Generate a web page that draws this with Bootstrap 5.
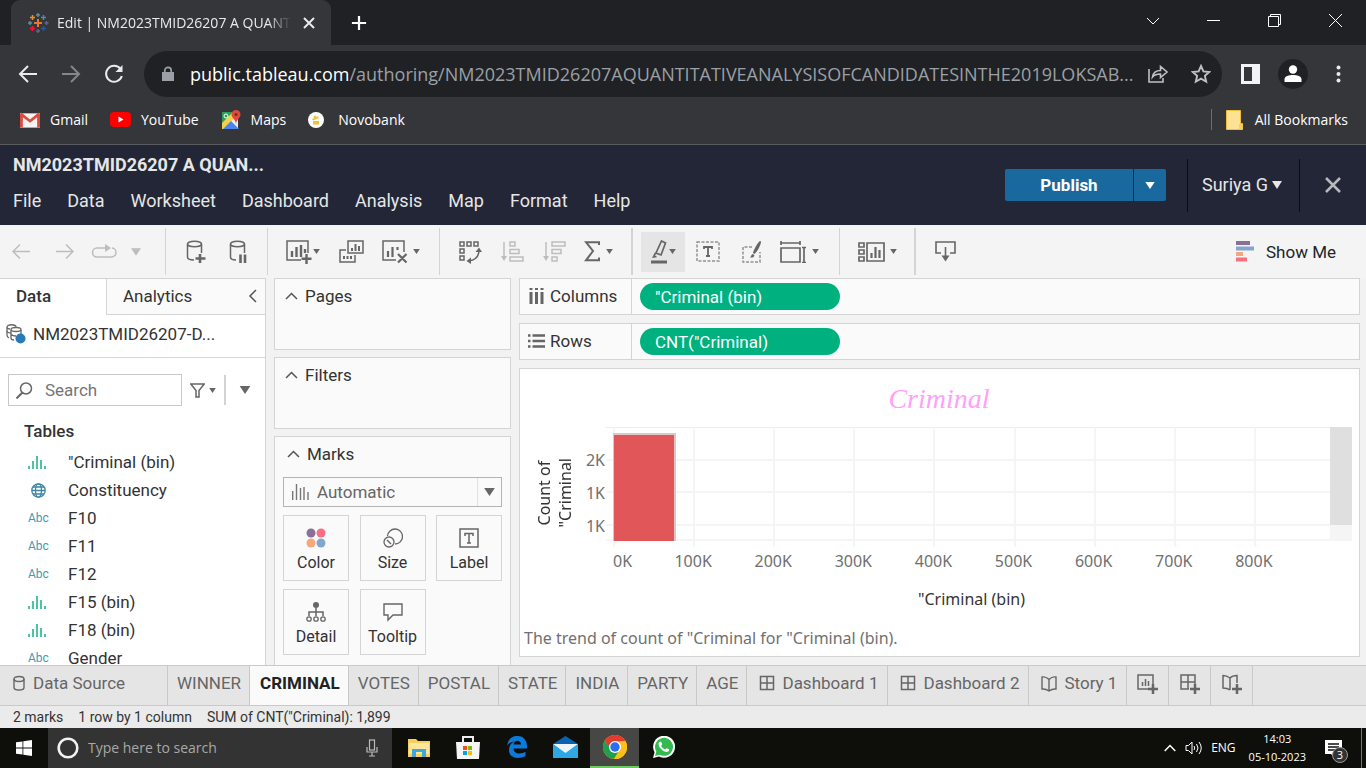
<!DOCTYPE html>
<html lang="en">
<head>
<meta charset="utf-8">
<meta name="viewport" content="width=device-width, initial-scale=1">
<title>Edit | NM2023TMID26207 A QUANTITATIVE ANALYSIS</title>
<link href="https://cdn.jsdelivr.net/npm/bootstrap@5.3.0/dist/css/bootstrap.min.css" rel="stylesheet">
<style>
  :root {
    --sys: "Open Sans", "Noto Sans", sans-serif;
    --app: Roboto, "Liberation Sans", sans-serif;
    --chart: "Noto Sans", "Open Sans", sans-serif;
    --line: #d4d4d4;
    --icon: #666;
  }
  body { height: 100vh; font-family: var(--app); font-size: 17px; line-height: 24px; color: #333; background: #f2f2f2; overflow: hidden; }
  svg { display: block; flex: none; }
  button { background: none; border: 0; padding: 0; color: inherit; font: inherit; }
  a { color: inherit; text-decoration: none; }
  h2, h3 { font: inherit; margin: 0; }
  .ln { fill: none; stroke: currentColor; stroke-width: 2; }
  .mid { fill: none; stroke: currentColor; stroke-width: 1.5; }
  .thin { fill: none; stroke: currentColor; stroke-width: 1; }

  /* browser frame */
  .tabstrip { height: 45px; background: #202124; color: #fff; font-family: var(--sys); }
  .btab { width: 320px; margin-left: 11px; padding: 0 16px; background: #35363a; border-radius: 9px 9px 0 0; font-size: 14px; color: #e8eaed; }
  .btab-title { -webkit-mask-image: linear-gradient(90deg, #000 90%, transparent); mask-image: linear-gradient(90deg, #000 90%, transparent); }
  .winbtn { width: 61px; }
  .navrow { height: 58px; padding: 0 25px 0 14px; background: #35363a; color: #e8eaed; }
  .navrow .navbtn { width: 43px; flex: none; }
  .omni { height: 46px; border-radius: 23px; background: #202124; color: #9aa0a6; font-family: var(--sys); font-size: 18px; padding: 0 14px 0 16px; gap: 14px; min-width: 0; margin-left: 1px; margin-right: 16px; }
  .omni .host { color: #fff; }
  .omni-ic { color: #bdc1c6; gap: 22px; }
  .dimnav { color: #85868a; }
  .avatar { width: 30px; height: 30px; border-radius: 50%; background: #202124; }
  .bmarks { height: 42px; padding: 0 18px 8px 20px; background: #35363a; border-bottom: 1px solid #5b5c60; color: #fff; font-family: var(--sys); font-size: 14px; gap: 22px; }
  .bmarks a { gap: 10px; }
  .bmarks .allb { border-left: 1px solid #6b6c70; height: 21px; padding-left: 14px; gap: 12px; }

  /* workbook header */
  .wbhead { height: 80px; background: #232637; color: #e6e6e6; padding-left: 13px; font-size: 18px; }
  .wbname { font-weight: 700; }
  .wbmenu { gap: 26px; }
  .pub { width: 128px; height: 32px; background: #19699f; color: #fff; font-size: 17px; font-weight: 700; border-radius: 2px 0 0 2px; }
  .pubmore { width: 33px; height: 32px; background: #19699f; color: #fff; border-radius: 0 2px 2px 0; }
  .userbox { height: 53px; border: solid #0b0c12; border-width: 0 1px; padding: 0 17px 0 14px; margin-left: 21px; }
  .wbclose { width: 66px; }

  /* toolbar */
  .tools { height: 53px; padding: 3px 0; background: #f4f4f4; color: var(--icon); }
  .grp { border-right: 1px solid #d4d4d4; }
  .grp.wide-sep { border-right-width: 2px; }
  .grp.last-grp { border: 0; }
  .grp button { height: 40px; width: 42px; display: flex; align-items: center; justify-content: center; gap: 1px; }
  .grp button.w24 { width: 24px; } .grp button.w46 { width: 46px; } .grp button.w52 { width: 52px; }
  .grp button.dim { color: #bdbdbd; }
  .grp button.on { background: #e5e5e5; width: 44px; }
  .showme { padding-right: 30px; gap: 12px; }

  /* panes */
  .work { min-height: 0; }
  .datapane { width: 266px; background: #fff; border-top: 1px solid var(--line); border-right: 1px solid var(--line); overflow: hidden; }
  .panetabs { height: 36px; }
  .panetabs .t1 { width: 106px; padding: 0 0 2px 16px; font-weight: 500; text-align: left; }
  .panetabs .t2 { background: #fafafa; border: solid var(--line); border-width: 0 0 1px 1px; padding: 0 8px 2px 16px; }
  .dsrow { height: 43px; border-bottom: 1px solid var(--line); padding: 0 6px 4px; gap: 7px; }
  .searchrow { padding: 16px 14px 0 8px; color: #666; }
  .sbox { width: 174px; height: 32px; border: 1px solid #c8c8c8; padding-left: 7px; gap: 12px; }
  .sbox input { border: 0; outline: 0; padding: 0; min-width: 0; width: 100%; font: inherit; color: #333; background: none; }
  .sbox input::placeholder { color: #757575; opacity: 1; }
  .vbar { width: 2px; height: 30px; background: #d4d4d4; }
  .tblname { padding: 13px 0 5px 24px; font-weight: 500; }
  .fields { margin: 0; padding: 0; list-style: none; }
  .fields li { height: 28px; padding-left: 28px; }
  .fields .ft { width: 40px; color: #4996b2; font-size: 12px; }
  .fields .gr { color: #4cc3a2; }

  .shelves { width: 237px; margin-left: 8px; gap: 7px; }
  .box { background: #fafafa; border: 1px solid var(--line); }
  .shelf { height: 72px; padding: 5px 10px; }
  .shelf-h { gap: 7px; }
  .marks { padding: 5px 8px 0; border-bottom: 0; }
  .marktype { height: 30px; border: 1px solid #b4b4b4; margin: 11px 0 8px; color: #666; }
  .marktype select { appearance: none; border: 0; background: none; color: inherit; font: inherit; padding: 0; outline: 0; }
  .marktype .dd { width: 24px; border-left: 1px solid #e2e2e2; height: 100%; }
  .markgrid { display: grid; grid-template-columns: repeat(3, 66px); justify-content: space-between; row-gap: 8px; }
  .markgrid button { height: 66px; border: 1px solid var(--line); padding-top: 5px; display: flex; flex-direction: column; align-items: center; justify-content: center; gap: 5px; font-size: 16px; line-height: 20px; }
  .markgrid svg { color: var(--icon); }

  .canvas { margin: 0 6px 8px 8px; min-width: 0; }
  .rc { height: 37px; margin-bottom: 8px; }
  .rc-l { width: 112px; height: 100%; border-right: 1px solid var(--line); padding: 0 0 2px 8px; gap: 5px; }
  .pill { width: 200px; height: 27px; border-radius: 14px; background: #00b180; color: #fff; padding: 0 15px; margin-left: 8px; text-align: left; }
  .view { background: #fff; border: 1px solid var(--line); padding: 12px 7px 5px 6px; min-height: 0; font-family: var(--chart); font-size: 16px; line-height: 20px; color: #707070; }
  .view h2 { font: italic 28px/36px "Liberation Serif", serif; color: #ffa0fa; text-align: center; }
  .chart { margin-top: 10px; display: grid; grid-template-columns: 58px 22px 7px minmax(0, 1fr) 22px; grid-template-rows: minmax(0, 1fr) 6px; min-height: 0; }
  .yname { grid-area: 1 / 1 / 3 / 2; writing-mode: vertical-rl; transform: rotate(180deg); text-align: center; color: #333; line-height: 21px; margin-top: 12px; padding-left: 8px; white-space: nowrap; align-self: center; justify-self: end; }
  .glrows { display: grid; grid-template-rows: 33fr 33fr 33fr 15fr; }
  .lines { grid-area: 1 / 3 / 2 / 5; border-top: 1px solid #ededed; }
  .lines div { border-bottom: 2px solid #f5f5f5; }
  .ylab { grid-area: 1 / 1 / 2 / 3; text-align: right; padding-right: 1px; }
  .ylab span { align-self: end; transform: translateY(50%); }
  .cols9 { display: grid; grid-template-columns: repeat(8, minmax(0, 80fr)) minmax(0, 76fr); }
  .vlines { grid-area: 1 / 4 / 3 / 5; }
  .vlines div { border-left: 2px solid #f5f5f5; }
  .bars { grid-area: 1 / 4 / 2 / 5; padding: 6px 0 0; z-index: 1; }
  .bars div { height: 100%; background: #e15759; border: solid #dcc6c6; border-width: 2px 2px 0 1px; }
  .vscroll { grid-area: 1 / 5 / 2 / 6; background: #f5f5f5; }
  .vscroll div { height: 86%; background: #dfdfdf; }
  .xlab { margin: 4px 22px 0 87px; }
  .xlab span { width: 0; display: flex; justify-content: center; white-space: nowrap; }
  .xlab span:first-child { justify-content: flex-start; }
  .xname { margin: 18px 22px 0 87px; text-align: center; color: #333; }
  .capt { margin: 19px 0 3px -2px; }

  /* sheet tabs and status */
  .sheets { height: 41px; background: #e5e5e5; border: solid #c9c9c9; border-width: 1px 0; color: #666; }
  .sheets button { border-right: 1px solid #c9c9c9; padding: 0 8px 5px 9px; display: flex; align-items: center; justify-content: center; gap: 7px; white-space: nowrap; }
  .sheets .src { width: 168px; justify-content: flex-start; padding-left: 12px; }
  .sheets .cur { background: #fafafa; color: #222; font-weight: 700; padding-left: 10px; }
  .sheets .ic { padding-left: 12px; padding-right: 9px; }
  .sheets .add { width: 42px; padding: 0 0 3px; }
  .stat { height: 22px; background: #ebebeb; padding-left: 13px; gap: 15px; font-size: 14px; line-height: 22px; }

  /* taskbar */
  .task { height: 40px; background: #0e0e0b; color: #fff; font-family: var(--sys); }
  .task .st { width: 48px; }
  .tsearch { width: 344px; background: #333; padding: 0 13px 0 9px; gap: 9px; }
  .tsearch input { border: 0; background: none; outline: 0; color: #fff; font: inherit; font-size: 14px; padding: 0; min-width: 0; }
  .tsearch input::placeholder { color: #a8a8a8; opacity: 1; }
  .apps { padding-left: 2px; }
  .task .app { width: 49px; display: flex; align-items: center; justify-content: center; border-bottom: 2px solid transparent; }
  .task .app.run { background: #474846; border-color: #6ccb5f; }
  .tray { font-size: 12px; line-height: 18px; gap: 9px; padding-right: 4px; white-space: nowrap; }
  .clock { font-size: 11px; }
  .notif { width: 37px; height: 40px; }
  .ncount { right: 4px; top: 19px; width: 16px; height: 16px; border: 1px solid #999; border-radius: 50%; background: #333; font-size: 11px; line-height: 14px; text-align: center; }
</style>
</head>
<body class="d-flex flex-column">

<svg width="0" height="0" class="position-absolute" aria-hidden="true">
  <symbol id="car" viewBox="0 0 8 6"><path d="M0 0h8L4 6z" fill="currentColor"/></symbol>
  <symbol id="hist" viewBox="0 0 18 13"><path d="M0 10h2v3H0zM4 5h2v8H4zM8 0h2v13H8zM12 4h2v9h-2zM16 10h2v3h-2z" fill="currentColor"/></symbol>
  <symbol id="up" viewBox="0 0 13 8"><path d="M1 7l5.500-5.500L12 7" fill="none" stroke="#555" stroke-width="1.500"/></symbol>
  <symbol id="dash" viewBox="0 0 16 16"><path d="M1.500 1.500h13v13h-13zM8 1.500v13M1.500 8h13" fill="none" stroke="currentColor" stroke-width="1.500"/></symbol>
  <symbol id="book" viewBox="0 0 16 17"><path d="M1 2c3-.5 5 .5 7 2.500C10 2.500 12 1.500 15 2v12c-3-.3-5 .5-7 2-2-1.500-4-2.300-7-2zM8 4.500V16" fill="none" stroke="currentColor" stroke-width="1.400"/></symbol>
</svg>

<!-- browser tab strip -->
<header class="flex-shrink-0">
<div class="tabstrip d-flex">
  <div class="btab d-flex align-items-center">
    <svg width="22" height="22" viewBox="0 0 22 22" class="me-2" fill="none" stroke-width="2">
      <path d="M11 7v8M7 11h8" stroke="#e8762d" stroke-width="2"/>
      <path d="M11 1v4M9 3h4M3 9v4M1 11h4" stroke="#5c8fa0" stroke-width="1.500"/>
      <path d="M5.500 3v5M3 5.500h5" stroke="#eb912c" stroke-width="1.500"/><path d="M16.500 3v5M14 5.500h5" stroke="#59879b" stroke-width="1.500"/>
      <path d="M5.500 14v5M3 16.500h5" stroke="#e8173a" stroke-width="1.800"/><path d="M16.500 14v5M14 16.500h5" stroke="#1f5a9e" stroke-width="1.500"/>
      <path d="M11 17v4M9 19h4M19.500 9v4M17.500 11h4" stroke="#5b6591" stroke-width="1.500"/>
    </svg>
    <span class="btab-title text-nowrap">Edit | NM2023TMID26207 A QUANT</span>
    <button class="ms-auto" aria-label="Close tab"><svg width="12" height="12" viewBox="0 0 12 12" class="ln"><path d="M1 1l10 10M11 1L1 11"/></svg></button>
  </div>
  <button class="px-3 ms-1" aria-label="New tab"><svg width="16" height="16" viewBox="0 0 18 18" class="ln"><path d="M9 1v16M1 9h16" stroke-width="2.500"/></svg></button>
  <div class="ms-auto d-flex pb-1">
    <button class="winbtn d-flex align-items-center justify-content-center" aria-label="Search tabs"><svg width="14" height="8" viewBox="0 0 14 8" class="thin"><path d="M1 1l6 6 6-6"/></svg></button>
    <button class="winbtn d-flex align-items-center justify-content-center" aria-label="Minimize"><svg width="13" height="13" viewBox="0 0 13 13" class="thin"><path d="M0 6.500h13"/></svg></button>
    <button class="winbtn d-flex align-items-center justify-content-center" aria-label="Restore"><svg width="13" height="13" viewBox="0 0 13 13" class="thin"><path d="M.5 2.500h10v10H.5zM2.500 2.500v-2h10v10h-2"/></svg></button>
    <button class="winbtn d-flex align-items-center justify-content-center" aria-label="Close"><svg width="13" height="13" viewBox="0 0 13 13" class="thin"><path d="M0 0l13 13M13 0L0 13"/></svg></button>
  </div>
</div>

<div class="navrow d-flex align-items-center">
  <button class="navbtn ps-1" aria-label="Back"><svg width="20" height="18" viewBox="0 0 20 18" class="ln"><path d="M19 9H3M10 1L2 9l8 8"/></svg></button>
  <button class="navbtn ps-1 dimnav" aria-label="Forward"><svg width="20" height="18" viewBox="0 0 20 18" class="ln"><path d="M1 9h16M10 1l8 8-8 8"/></svg></button>
  <button class="navbtn ps-1" aria-label="Reload"><svg width="20" height="20" viewBox="0 0 20 20" class="ln"><path d="M16.500 5A8 8 0 1 0 17.800 12"/><path d="M18.500 1v7h-7z" fill="currentColor" stroke="none"/></svg></button>
  <div class="omni d-flex align-items-center flex-grow-1">
    <svg width="16" height="16" viewBox="0 0 16 16"><path d="M2 6h12v9H2z" fill="#9aa0a6"/><path d="M4.800 7V4.500a3.200 3.200 0 0 1 6.400 0V7" fill="none" stroke="#9aa0a6" stroke-width="1.700"/></svg>
    <div class="text-nowrap flex-grow-1" role="textbox" aria-label="Address" tabindex="0"><span class="host">public.tableau.com</span>/authoring/NM2023TMID26207AQUANTITATIVEANALYSISOFCANDIDATESINTHE2019LOKSAB...</div>
    <div class="omni-ic d-flex">
      <button aria-label="Share"><svg width="22" height="20" viewBox="0 0 22 20" fill="none" stroke="currentColor" stroke-width="1.600"><path d="M2 5v13h14v-4M5.500 13c.7-4.500 3.500-6.500 8-6.500V2.500L20 8l-6.500 5.500V10c-3.500 0-6 .5-8 3z"/></svg></button>
      <button aria-label="Bookmark"><svg width="20" height="20" viewBox="0 0 20 20" fill="none" stroke="currentColor" stroke-width="1.900"><path d="M10 2l2.400 5.400 5.900.6-4.400 3.900 1.300 5.800L10 14.700l-5.200 3 1.300-5.800L1.700 8l5.900-.6z"/></svg></button>
    </div>
  </div>
  <button aria-label="Side panel"><svg width="24" height="20" viewBox="0 0 24 20"><path d="M3 0h19v20H3zM6 3v14h8V3z" fill="#f1f3f4" fill-rule="evenodd"/></svg></button>
  <button class="avatar d-flex align-items-center justify-content-center ms-3" aria-label="Profile"><svg width="18" height="18" viewBox="0 0 18 18" fill="#fff"><circle cx="9" cy="4.500" r="4.200"/><path d="M.5 17v-2.500C.5 11 5 10 9 10s8.500 1 8.500 4.500V17z"/></svg></button>
  <button class="ms-4 ps-1" aria-label="Menu"><svg width="5" height="18" viewBox="0 0 5 18" fill="#e8eaed"><circle cx="2.500" cy="2.500" r="2"/><circle cx="2.500" cy="9" r="2"/><circle cx="2.500" cy="15.500" r="2"/></svg></button>
</div>

<nav class="bmarks d-flex align-items-center">
  <a href="#" class="d-flex align-items-center"><svg width="20" height="16" viewBox="0 0 21 16"><path d="M0 1h21v15H0z" fill="#f4f4f4"/><path d="M0 2v14h3V5l7.500 6L18 5v11h3V2L19.500 0 10.500 7.500 1.500 0z" fill="#dd4b3e"/></svg>Gmail</a>
  <a href="#" class="d-flex align-items-center"><svg width="21" height="15" viewBox="0 0 21 15"><rect width="21" height="15" rx="4" fill="#f00"/><path d="M8.500 4.500v6l5-3z" fill="#fff"/></svg>YouTube</a>
  <a href="#" class="d-flex align-items-center"><svg width="20" height="20" viewBox="0 0 20 20"><path d="M1 2h16v17H1z" fill="#eee"/><path d="M1 2h12L1 14z" fill="#2c9e57"/><path d="M1 13L12 2l4 4L2 19H1z" fill="#f7d04a"/><path d="M2 19l8-8 8 8z" fill="#4a86e8"/><circle cx="5" cy="6" r="2" fill="none" stroke="#fff"/><path d="M15 0a4.500 4.500 0 0 1 4.500 4.500C19.500 8 15.500 9 15 14c-.5-5-4.500-6-4.500-9.500A4.500 4.500 0 0 1 15 0z" fill="#df4a3c"/><circle cx="15" cy="4.500" r="1.500" fill="#80281f"/></svg>Maps</a>
  <a href="#" class="d-flex align-items-center"><svg width="16" height="16" viewBox="0 0 16 16" class="me-1"><circle cx="8" cy="8" r="8" fill="#fff"/><path d="M4 7l5-2 1-1 1 2-6 2.500zM5 9h6v3.500H5z" fill="#f2c230"/><circle cx="7" cy="5" r="1.500" fill="#f2c230"/></svg>Novobank</a>
  <a href="#" class="allb d-flex align-items-center ms-auto"><svg width="17" height="20" viewBox="0 0 17 20"><path d="M.5.5h14v13h2v6H.5z" fill="#fde293" stroke="#eebf3d"/><path d="M13 14h3.500v5.500H13z" fill="#f6cf59"/></svg>All Bookmarks</a>
</nav>
</header>

<!-- workbook header -->
<div class="wbhead d-flex align-items-center flex-shrink-0">
  <div class="align-self-stretch d-flex flex-column pt-2">
    <div class="wbname">NM2023TMID26207 A QUAN...</div>
    <nav class="wbmenu d-flex pt-2 mt-1">
      <a href="#">File</a><a href="#">Data</a><a href="#">Worksheet</a><a href="#">Dashboard</a><a href="#">Analysis</a><a href="#">Map</a><a href="#">Format</a><a href="#">Help</a>
    </nav>
  </div>
  <div class="ms-auto d-flex align-items-center">
    <button class="pub">Publish</button>
    <button class="pubmore d-flex align-items-center justify-content-center border-start border-dark" aria-label="Publish options"><svg width="10" height="7"><use href="#car"/></svg></button>
    <button class="userbox d-flex align-items-center">Suriya G<svg width="10" height="8" viewBox="0 0 10 8" class="ms-1"><path d="M0 0h10L5 8z" fill="currentColor"/></svg></button>
    <button class="wbclose d-flex justify-content-center" aria-label="Close workbook"><svg width="16" height="16" viewBox="0 0 16 16" class="ln"><path d="M1 1l14 14M15 1L1 15" stroke="#b9b9bd" stroke-width="2.500"/></svg></button>
  </div>
</div>

<!-- toolbar -->
<div class="tools d-flex flex-shrink-0">
  <div class="grp d-flex align-items-center" style="width:166px">
    <button class="dim" aria-label="Undo"><svg width="18" height="15" viewBox="0 0 18 15" class="mid"><path d="M18 7.500H1M8 .5l-7 7 7 7"/></svg></button>
    <button class="dim w46" aria-label="Redo"><svg width="18" height="15" viewBox="0 0 18 15" class="mid"><path d="M0 7.500h17M10 .5l7 7-7 7"/></svg></button>
    <button class="dim w24 ms-1" aria-label="Replay"><svg width="26" height="16" viewBox="0 0 26 16"><path d="M15 4H6a4.500 4.500 0 0 0 0 9h14a4.500 4.500 0 0 0 1-9" fill="none" stroke="currentColor" stroke-width="1.500"/><path d="M14 0l6 4-6 4z" fill="currentColor"/></svg></button>
    <button class="dim w24 ms-2" aria-label="Replay options"><svg width="10" height="8"><use href="#car"/></svg></button>
  </div>
  <div class="grp d-flex align-items-center justify-content-center" style="width:102px">
    <button aria-label="New data source"><svg width="20" height="24" viewBox="0 0 20 24"><path d="M8 20c-4 0-6.500-1-6.500-3V4M15.500 4v9" class="mid"/><ellipse cx="8.500" cy="4" rx="7" ry="2.800" class="mid"/><path d="M14 14v9M9.500 18.500h10" stroke="currentColor" stroke-width="2.600"/></svg></button>
    <button aria-label="Pause updates"><svg width="18" height="24" viewBox="0 0 18 24"><path d="M7 20c-4 0-5.500-1-5.500-3V4M15.500 4v9" class="mid"/><ellipse cx="8.500" cy="4" rx="7" ry="2.800" class="mid"/><path d="M11.500 14.500V23M16 14.500V23" stroke="currentColor" stroke-width="2.600"/></svg></button>
  </div>
  <div class="grp d-flex align-items-center justify-content-center pe-1" style="width:172px">
    <button class="w46" aria-label="New worksheet"><svg width="26" height="24" viewBox="0 0 26 24"><path d="M15 20H1V1h21v12" class="mid"/><path d="M6 11v6M10.500 7v10M15 5v12M19 9v4M20.500 14v10M15.500 18.800h10" stroke="currentColor" stroke-width="2.400"/></svg><svg width="7" height="5"><use href="#car"/></svg></button>
    <button class="w52" aria-label="Duplicate"><svg width="25" height="24" viewBox="0 0 25 24"><path d="M9 1h15v12H9zM7 10H1v12h15v-7" class="mid"/><path d="M13 8v3M16.500 4v7M20 6v5M5 16v3M8.500 16v3M12 16v3" stroke="currentColor" stroke-width="2"/></svg></button>
    <button class="w46" aria-label="Clear sheet"><svg width="26" height="24" viewBox="0 0 26 24"><path d="M14 20H1V1h21v11" class="mid"/><path d="M6 11v6M10.500 7v10M15.500 7v3M16 14l8.500 8.500M24.500 14L16 22.500" stroke="currentColor" stroke-width="2.200"/></svg><svg width="7" height="5" class="ms-1"><use href="#car"/></svg></button>
  </div>
  <div class="grp wide-sep d-flex align-items-center justify-content-center" style="width:193px">
    <button aria-label="Swap"><svg width="23" height="24" viewBox="0 0 23 24"><path d="M1 2h4v4H1zM8 2h4v4H8zM15 2h4v4h-4zM1 9h4v4H1zM1 16h4v4H1z" class="mid"/><path d="M20 10c0 6-3 10-10 11" class="mid"/><path d="M16.500 12L20 7.500l3 4.500zM12 17.500V24l-4.500-3z" fill="currentColor"/></svg></button>
    <button class="dim" aria-label="Sort ascending"><svg width="23" height="21" viewBox="0 0 23 21"><path d="M3 1v17M9 1h5v4H9zM9 8.500h9v4H9zM9 16h13v4H9z" class="mid"/><path d="M0 15h6l-3 5z" fill="currentColor"/></svg></button>
    <button class="dim" aria-label="Sort descending"><svg width="23" height="21" viewBox="0 0 23 21"><path d="M3 1v17M9 1h13v4H9zM9 8.500h9v4H9zM9 16h5v4H9z" class="mid"/><path d="M0 15h6l-3 5z" fill="currentColor"/></svg></button>
    <button class="w46" aria-label="Totals"><svg width="17" height="21" viewBox="0 0 17 21"><path d="M15 4V1.200H2L9 10 2 19.300h13V16.500" class="ln"/></svg><svg width="7" height="5" class="ms-1"><use href="#car"/></svg></button>
  </div>
  <div class="grp d-flex align-items-center ps-2" style="width:207px">
    <button class="on" aria-label="Highlight"><svg width="18" height="24" viewBox="0 0 18 24"><path d="M11.500 1l4 2-4.500 12-5-2zM5.500 13l-2 4 3-.5" fill="none" stroke="currentColor" stroke-width="1.700"/><path d="M1 22h16" stroke="currentColor" stroke-width="3"/></svg><svg width="7" height="5"><use href="#car"/></svg></button>
    <button class="w46" aria-label="Show mark labels"><svg width="24" height="21" viewBox="0 0 24 21"><path d="M1 1h22v19H1z" fill="none" stroke="currentColor" stroke-width="1.500" stroke-dasharray="3 1.500" opacity=".7"/><path d="M8 8V6h8v2M12 6v9M10 15h4" fill="none" stroke="currentColor" stroke-width="1.800"/></svg></button>
    <button aria-label="Format"><svg width="20" height="22" viewBox="0 0 20 22"><path d="M10 6H1v15h17V11" fill="none" stroke="currentColor" stroke-width="1.500" stroke-dasharray="3 1.500" opacity=".7"/><path d="M18.500 0c2 1-3 11-6 13l-1.500-1C12 8 16.500 0 18.500 0zM11 13l1.500 1.500c-1 2.500-2.500 2-4.500 2 1.500-1 1-3 3-3.500z" fill="currentColor"/></svg></button>
    <button class="w52" aria-label="Fit"><svg width="27" height="22" viewBox="0 0 27 22"><path d="M1 0v4M20 0v4M1 2h19M1 7h19v14H1zM22 6.500h4M22 21.500h4M24 7v14" fill="none" stroke="currentColor" stroke-width="1.700"/></svg><svg width="7" height="5" class="ms-1"><use href="#car"/></svg></button>
  </div>
  <div class="grp wide-sep d-flex align-items-center justify-content-center" style="width:76px">
    <button class="w46" aria-label="Show cards"><svg width="27" height="20" viewBox="0 0 27 20"><path d="M1 1h5v4H1zM1 8h5v4H1zM1 15h5v4H1zM9 1h17v18H9z" fill="none" stroke="currentColor" stroke-width="1.700"/><path d="M13.500 11v5M17.500 5v11M21.500 8v8" stroke="currentColor" stroke-width="2.200"/></svg><svg width="7" height="5" class="ms-1"><use href="#car"/></svg></button>
  </div>
  <div class="grp last-grp d-flex align-items-center ps-2">
    <button aria-label="Download"><svg width="21" height="21" viewBox="0 0 21 21"><path d="M6 12H1V1h19v11h-5M10.500 6v10" fill="none" stroke="currentColor" stroke-width="1.600"/><path d="M6.500 14.500h8l-4 6z" fill="currentColor"/></svg></button>
  </div>
  <button class="showme d-flex align-items-center ms-auto text-dark"><svg width="18" height="21" viewBox="0 0 18 21"><path d="M0 0h14v4H0z" fill="#8a7099"/><path d="M0 5.500h18v4H0z" fill="#82a6ce"/><path d="M0 11h7v4H0z" fill="#f4a582"/><path d="M0 16.500h11v4H0z" fill="#f87080"/></svg>Show Me</button>
</div>

<!-- workspace -->
<main class="work d-flex flex-grow-1">
  <aside class="datapane flex-shrink-0">
    <div class="panetabs d-flex">
      <button class="t1">Data</button>
      <button class="t2 flex-grow-1 d-flex align-items-center">Analytics<svg width="9" height="14" viewBox="0 0 9 14" class="ms-auto"><path d="M8 1L2 7l6 6" fill="none" stroke="#555" stroke-width="1.500"/></svg></button>
    </div>
    <div class="dsrow d-flex align-items-center">
      <svg width="20" height="20" viewBox="0 0 20 20"><g fill="none" stroke="#666" stroke-width="1.300"><path d="M3 14c-2-1-2-2-2-3V3c0-3 9-3 9 0M1 3c0 1 1.500 2 3 2"/><ellipse cx="10" cy="5.500" rx="5" ry="2"/><path d="M5 6v8c0 1.500 2 2 3 2M1 7c0 1 2 2 4 2M5 10c1 2 4 2 5 2M15 6v4"/></g><circle cx="14.500" cy="14.500" r="5" fill="#2a7ab5"/></svg>
      <span>NM2023TMID26207-D...</span>
    </div>
    <div class="searchrow d-flex align-items-center">
      <label class="sbox d-flex align-items-center"><svg width="17" height="17" viewBox="0 0 17 17" fill="none" stroke="currentColor"><circle cx="10" cy="6.500" r="5.500" stroke-width="1.500"/><path d="M6.500 10.500l-6 6" stroke-width="2"/></svg><input type="text" placeholder="Search" aria-label="Search fields"></label>
      <button class="d-flex align-items-center ms-2" aria-label="Filter fields"><svg width="15" height="15" viewBox="0 0 15 15"><path d="M.8 1h13.400L9 7.500V14H6V7.500z" fill="none" stroke="currentColor" stroke-width="1.500"/></svg><svg width="7" height="5" class="ms-1"><use href="#car"/></svg></button>
      <span class="vbar ms-2"></span>
      <button class="ms-auto" aria-label="More"><svg width="12" height="8"><use href="#car"/></svg></button>
    </div>
    <h3 class="tblname">Tables</h3>
    <ul class="fields">
      <li class="d-flex align-items-center"><span class="ft gr"><svg width="18" height="13"><use href="#hist"/></svg></span>"Criminal (bin)</li>
      <li class="d-flex align-items-center"><span class="ft"><svg width="20" height="15" viewBox="-3 0 20 15" fill="none" stroke="#3d87a5" stroke-width="1.300"><circle cx="7.500" cy="7.500" r="6.700"/><ellipse cx="7.500" cy="7.500" rx="3" ry="6.700"/><path d="M1 7.500h13M2 4h11M2 11h11"/></svg></span>Constituency</li>
      <li class="d-flex align-items-center"><span class="ft">Abc</span>F10</li>
      <li class="d-flex align-items-center"><span class="ft">Abc</span>F11</li>
      <li class="d-flex align-items-center"><span class="ft">Abc</span>F12</li>
      <li class="d-flex align-items-center"><span class="ft gr"><svg width="18" height="13"><use href="#hist"/></svg></span>F15 (bin)</li>
      <li class="d-flex align-items-center"><span class="ft gr"><svg width="18" height="13"><use href="#hist"/></svg></span>F18 (bin)</li>
      <li class="d-flex align-items-center"><span class="ft">Abc</span>Gender</li>
    </ul>
  </aside>

  <section class="shelves d-flex flex-column flex-shrink-0">
    <div class="box shelf"><h3 class="shelf-h d-flex align-items-center"><svg width="13" height="8"><use href="#up"/></svg>Pages</h3></div>
    <div class="box shelf"><h3 class="shelf-h d-flex align-items-center"><svg width="13" height="8"><use href="#up"/></svg>Filters</h3></div>
    <div class="box marks flex-grow-1">
      <h3 class="shelf-h d-flex align-items-center px-1"><svg width="13" height="8"><use href="#up"/></svg>Marks</h3>
      <div class="marktype d-flex align-items-center">
        <svg width="17" height="16" viewBox="0 0 17 16" class="mx-2"><path d="M.7 7v9M4.500 0v16M8.500 4v12M12 3v13M16 8v8" stroke="#777" stroke-width="1.400"/></svg>
        <select class="flex-grow-1" aria-label="Mark type"><option>Automatic</option></select>
        <span class="dd d-flex align-items-center justify-content-center"><svg width="11" height="8"><use href="#car"/></svg></span>
      </div>
      <div class="markgrid">
        <button><svg width="20" height="20" viewBox="0 0 20 20"><circle cx="5" cy="5" r="4.500" fill="#8a7099"/><circle cx="15" cy="5" r="4.500" fill="#f87080"/><circle cx="5" cy="15" r="4.500" fill="#f4a87c"/><circle cx="15" cy="15" r="4.500" fill="#82a6ce"/></svg>Color</button>
        <button><svg width="20" height="20" viewBox="0 0 20 20" fill="none" stroke="currentColor"><path d="M4.500 8A7.500 7.500 0 1 1 12 16" stroke-width="1.300"/><circle cx="6" cy="14" r="5" stroke-width="1.300"/><path d="M4 12l4 4" stroke-width="1.500"/></svg>Size</button>
        <button><svg width="20" height="20" viewBox="0 0 20 20" fill="none" stroke="currentColor"><path d="M1 1h18v18H1z" stroke-width="1.500"/><path d="M6 8V5.500h8V8M10 5.500V15M8 15h4" stroke-width="1.500"/></svg>Label</button>
        <button><svg width="20" height="20" viewBox="0 0 20 20" fill="none" stroke="currentColor"><circle cx="10" cy="3" r="3" fill="currentColor" stroke="none"/><path d="M10 6v8M3 14v-4h14v4" stroke-width="1.500"/><circle cx="3" cy="17" r="2.200" stroke-width="1.300"/><circle cx="10" cy="17" r="2.200" stroke-width="1.300"/><circle cx="17" cy="17" r="2.200" stroke-width="1.300"/></svg>Detail</button>
        <button><svg width="20" height="20" viewBox="0 0 20 20" fill="none" stroke="currentColor"><path d="M1 2h18v11h-9l-5 5v-5H1z" stroke-width="1.400"/></svg>Tooltip</button>
      </div>
    </div>
  </section>

  <section class="canvas d-flex flex-column flex-grow-1">
    <div class="box rc d-flex align-items-center flex-shrink-0">
      <div class="rc-l d-flex align-items-center"><svg width="17" height="16" viewBox="0 0 17 16"><path d="M3 0v2M3 4v12M8.500 0v2M8.500 4v12M14 0v2M14 4v12" stroke="#666" stroke-width="3"/></svg>Columns</div>
      <button class="pill">"Criminal (bin)</button>
    </div>
    <div class="box rc d-flex align-items-center flex-shrink-0">
      <div class="rc-l d-flex align-items-center"><svg width="17" height="14" viewBox="0 0 17 14"><path d="M0 1.500h2.500M4.500 1.500H17M0 7h2.500M4.500 7H17M0 12.500h2.500M4.500 12.500H17" stroke="#666" stroke-width="2.500"/></svg>Rows</div>
      <button class="pill">CNT("Criminal)</button>
    </div>
    <div class="view d-flex flex-column flex-grow-1">
      <h2>Criminal</h2>
      <div class="chart flex-grow-1">
        <div class="yname">Count of<br>"Criminal</div>
        <div class="glrows ylab"><span>2K</span><span>1K</span><span>1K</span></div>
        <div class="glrows lines"><div></div><div></div><div></div><div></div></div>
        <div class="cols9 vlines"><div></div><div></div><div></div><div></div><div></div><div></div><div></div><div></div><div></div></div>
        <div class="bars"><div style="width:8.800%"></div></div>
        <div class="vscroll"><div></div></div>
      </div>
      <div class="cols9 xlab"><span>0K</span><span>100K</span><span>200K</span><span>300K</span><span>400K</span><span>500K</span><span>600K</span><span>700K</span><span>800K</span></div>
      <div class="xname">"Criminal (bin)</div>
      <div class="capt">The trend of count of "Criminal for "Criminal (bin).</div>
    </div>
  </section>
</main>

<!-- sheet tabs -->
<nav class="sheets d-flex flex-shrink-0">
  <button class="src"><svg width="14" height="16" viewBox="0 0 14 16" fill="none" stroke="currentColor" stroke-width="1.400"><ellipse cx="7" cy="4" rx="5" ry="2.500"/><path d="M2 4v8.500C2 14 4 15 7 15s5-1 5-2.500V4"/></svg>Data Source</button>
  <button>WINNER</button><button class="cur">CRIMINAL</button><button>VOTES</button><button>POSTAL</button><button>STATE</button><button>INDIA</button><button>PARTY</button><button>AGE</button>
  <button class="ic"><svg width="16" height="16"><use href="#dash"/></svg>Dashboard 1</button>
  <button class="ic"><svg width="16" height="16"><use href="#dash"/></svg>Dashboard 2</button>
  <button class="ic"><svg width="16" height="17"><use href="#book"/></svg>Story 1</button>
  <button class="add" aria-label="New worksheet"><svg width="22" height="21" viewBox="0 0 22 21" fill="none" stroke="currentColor"><path d="M12 15H1V1h15v9" stroke-width="1.500"/><path d="M5.500 8v4M8.500 5v7M11.500 7v5" stroke-width="1.500"/><path d="M16 10v10M11 15h10" stroke-width="2.500"/></svg></button>
  <button class="add" aria-label="New dashboard"><svg width="22" height="21" viewBox="0 0 22 21" fill="none" stroke="currentColor"><path d="M10 15H2V1h14v9M9 1v14M2 8h14" stroke-width="1.500"/><path d="M16 10v10M11 15h10" stroke-width="2.500"/></svg></button>
  <button class="add" aria-label="New story"><svg width="22" height="21" viewBox="0 0 22 21" fill="none" stroke="currentColor"><path d="M9 16c-2-1.500-4-2-7-2V1.500c3 0 5 1 7 2.500 1.500-1.500 4-2.500 7-2.500V9M9 4v12" stroke-width="1.500"/><path d="M16 10v10M11 15h10" stroke-width="2.500"/></svg></button>
</nav>
<div class="stat d-flex flex-shrink-0"><span>2 marks</span><span>1 row by 1 column</span><span>SUM of CNT("Criminal): 1,899</span></div>

<!-- taskbar -->
<footer class="task d-flex flex-shrink-0">
  <button class="st d-flex align-items-center justify-content-center" aria-label="Start"><svg width="16" height="16" viewBox="0 0 16 16" fill="#fff"><path d="M0 2.300l6.500-.9v6.200H0zM7.300 1.300L16 0v7.600H7.300zM0 8.400h6.500v6.200L0 13.700zM7.300 8.400H16V16l-8.700-1.300z"/></svg></button>
  <label class="tsearch d-flex align-items-center"><svg width="22" height="22" viewBox="0 0 22 22"><circle cx="11" cy="11" r="9.300" fill="none" stroke="#f2f2f2" stroke-width="2.600"/></svg><input class="flex-grow-1" type="text" placeholder="Type here to search" aria-label="Type here to search"><svg width="14" height="18" viewBox="0 0 14 18" fill="none" stroke="#bbb" stroke-width="1.200"><rect x="4.500" y="1" width="5" height="10"/><path d="M2 8v5h10V8M7 13v4M4 17h6"/></svg></label>
  <div class="apps d-flex">
  <button class="app" aria-label="File Explorer"><svg width="22" height="19" viewBox="0 0 22 19"><path d="M0 1h8l2 2h12v16H0z" fill="#f7cf5f"/><path d="M1 5h20v11H1z" fill="#fde69b"/><path d="M4 19v-8h14v8h-4v-5H8v5z" fill="#3ba7dd"/></svg></button>
  <button class="app" aria-label="Store"><svg width="24" height="25" viewBox="0 0 24 25"><path d="M7 7V2h10v5" fill="none" stroke="#eee" stroke-width="2"/><path d="M0 7h24l-1 17H1z" fill="#f5f5f5"/><path d="M7 11h4v4H7z" fill="#f25022"/><path d="M12 11h4v4h-4z" fill="#7fba00"/><path d="M7 16h4v4H7z" fill="#00a4ef"/><path d="M12 16h4v4h-4z" fill="#ffb900"/></svg></button>
  <button class="app" aria-label="Edge"><svg width="22" height="22" viewBox="0 0 22 22"><path d="M1 10C2 3 6 0 11.500 0 18 0 21 5 21 10v2.500H7.500c.2 6 7.500 6 12 3.300V20C13 23.500 3 22.500 3 14c0-4 2-7 5-8.500C4.500 6 2.500 7.500 1 10zm6.500-1.500H15C15 3.500 8 3.500 7.500 8.500z" fill="#0a7bdb"/></svg></button>
  <button class="app" aria-label="Mail"><svg width="25" height="22" viewBox="0 0 25 22"><path d="M0 8L12.500 0 25 8v14H0z" fill="#0a63b1"/><path d="M0 8h25L12.500 18z" fill="#eef5fa"/><path d="M0 8l12.500 9L25 8v14H0z" fill="#2ea8e5"/></svg></button>
  <button class="app run" aria-label="Chrome"><svg width="24" height="24" viewBox="0 0 24 24"><circle cx="12" cy="12" r="12" fill="#fbc116"/><path d="M1.600 6A12 12 0 0 1 22.400 6L12 7l-4 8z" fill="#e33b2e"/><path d="M1.600 6A12 12 0 0 0 11 24l5-8-8-2z" fill="#229f4d"/><path d="M12 6.500h10.700A12 12 0 0 1 11 24l5-8z" fill="#fbc116"/><circle cx="12" cy="12" r="6" fill="#fff"/><circle cx="12" cy="12" r="4.700" fill="#2a6fe8"/></svg></button>
  <button class="app" aria-label="WhatsApp"><svg width="22" height="22" viewBox="0 0 22 22"><path d="M0 22l1.600-5.700A11 11 0 1 1 6 20.500z" fill="#fff"/><path d="M2 20l1.300-4.500a9 9 0 1 1 3.300 3.200z" fill="#33b94f"/><path d="M7.500 5.500c1 0 1.500 2.500 1.500 3-.2.700-1 1-.7 1.500.9 1.700 2 2.700 3.700 3.400.6.200 1-1.200 1.600-1.200.5 0 2.400 1 2.600 1.300 0 1.500-1 2.500-2.700 2.500-3 0-8-4.500-8-8 0-1.300 1-2.500 2-2.500z" fill="#fff"/></svg></button>
  </div>
  <div class="tray ms-auto d-flex align-items-center">
    <button aria-label="Hidden icons"><svg width="12" height="8" viewBox="0 0 12 8" fill="none" stroke="currentColor"><path d="M.7 7L6 1.500 11.300 7" stroke-width="1.500"/></svg></button>
    <button aria-label="Volume"><svg width="17" height="14" viewBox="0 0 17 14" class="thin"><path d="M1 4.500h2.500L7 1v12L3.500 9.500H1zM9 5q1.500 2 0 4M11.500 3q3 4 0 8M14 1q4.500 6 0 12"/></svg></button>
    <span>ENG</span>
    <span class="clock text-center ms-1">14:03<br>05-10-2023</span>
    <button class="notif position-relative d-flex justify-content-center pt-2" aria-label="Notifications"><svg width="18" height="20" viewBox="0 0 18 20" class="mt-1"><path d="M0 0h17v14h-7v4l-4-4H0z" fill="#fff"/><path d="M3 4h11M3 7h11M3 10h8" stroke="#111" stroke-width="1.300"/></svg><span class="ncount position-absolute">3</span></button>
    <span class="border-start border-secondary align-self-stretch"></span>
  </div>
</footer>
<script src="https://cdn.jsdelivr.net/npm/bootstrap@5.3.0/dist/js/bootstrap.bundle.min.js"></script>
</body>
</html>
